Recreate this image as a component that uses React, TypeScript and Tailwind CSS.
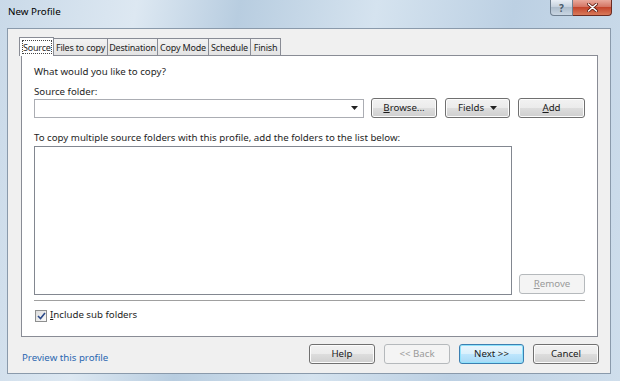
import React from "react";

const font = { fontFamily: '"Noto Sans", "Open Sans", sans-serif' };

function Btn({ children, w = "w-[65px]", kind = "normal" }: { children: React.ReactNode; w?: string; kind?: "normal" | "disabled" | "default" }) {
  const cls =
    kind === "disabled"
      ? "border-[#b5b9bc] bg-[#f4f4f4] text-[#9a9a9a]"
      : kind === "default"
      ? "border-[#3c7fb1] bg-[linear-gradient(#eaf6fd_0%,#d9f0fc_50%,#bee6fd_50%,#a7d9f5_100%)] text-[#1a1a1a] shadow-[inset_0_0_0_1px_#8fe3fc]"
      : "border-[#707070] bg-[linear-gradient(#f2f2f2_0%,#ebebeb_50%,#dddddd_50%,#cfcfcf_100%)] text-[#1a1a1a] shadow-[inset_0_0_0_1px_#fcfcfc]";
  return (
    <div className={`${w} h-[20px] rounded-[3px] border ${cls} flex items-center justify-center text-[9.7px] leading-none whitespace-nowrap`}>
      {children}
    </div>
  );
}

function Tab({ label, w, selected = false }: { label: string; w: string; selected?: boolean }) {
  if (selected) {
    return (
      <div className={`${w} flex-none h-[19px] px-[2px] pt-[2px] bg-white border border-b-0 border-[#898c95] -mb-px relative z-10 flex`}>
        <div className="flex-1 border border-dotted border-[#444] h-[14px] flex items-center justify-center text-[9px] tracking-[-0.2px] leading-none whitespace-nowrap">{label}</div>
      </div>
    );
  }
  return (
    <div className={`${w} flex-none h-[17px] border border-b-0 border-[#898c95] bg-[linear-gradient(#f3f3f3,#e3e3e3)] flex items-center justify-center text-[9px] tracking-[-0.2px] leading-none whitespace-nowrap -ml-px`}>
      {label}
    </div>
  );
}

export default function App() {
  return (
    <div className="w-[620px] h-[381px] overflow-hidden bg-[linear-gradient(100deg,#c9d9e8_0%,#dde8f2_20%,#b8cde0_35%,#d5e3ef_55%,#bcd0e3_75%,#cfdeec_100%)] text-[#1e1e1e] flex flex-col" style={font}>
      {/* title bar */}
      <div className="h-[28px] flex items-start shrink-0">
        <div className="pl-[8px] pt-[5px] text-[9.8px] text-black">New Profile</div>
        <div className="ml-auto mr-[8px] flex">
          <div className="w-[23px] h-[16px] rounded-bl-[4px] border border-[#6f7f90] border-t-0 bg-[linear-gradient(#e8eef5,#c3cfdc_50%,#aebdcc_50%,#c9d6e3)] flex items-center justify-center text-[10px] text-[#4a5a6a] leading-none font-bold">?</div>
          <div className="w-[39px] h-[16px] rounded-br-[4px] border border-l-0 border-t-0 border-[#6b2b22] bg-[linear-gradient(#e9a99c,#d2705e_50%,#c4452c_50%,#d97a5a)] flex items-center justify-center">
            <svg width="11" height="9" viewBox="0 0 11 9">
              <path d="M1.5 1 L9.5 8 M9.5 1 L1.5 8" stroke="#5a1a10" strokeWidth="3" strokeLinecap="round" />
              <path d="M1.5 1 L9.5 8 M9.5 1 L1.5 8" stroke="#ffffff" strokeWidth="1.6" strokeLinecap="round" />
            </svg>
          </div>
        </div>
      </div>
      {/* client */}
      <div className="flex-1 ml-[7px] mr-[9px] mb-[7px] border border-[#8a9aab] bg-[#f0f0f0] flex flex-col">
        <div className="pl-[13px] pr-[12px] pt-[7px] flex flex-col">
          {/* tabs */}
          <div className="flex items-end h-[19px] -ml-[2px]">
            <Tab label="Source" w="w-[35px]" selected />
            <Tab label="Files to copy" w="w-[55px]" />
            <Tab label="Destination" w="w-[51px]" />
            <Tab label="Copy Mode" w="w-[52px]" />
            <Tab label="Schedule" w="w-[43px]" />
            <Tab label="Finish" w="w-[31px]" />
          </div>
          {/* panel */}
          <div className="h-[282px] bg-white border border-[#898c95] px-[12px] pt-[8px] flex flex-col text-[9.7px]">
            <div className="h-[15px] leading-[15px]">What would you like to copy?</div>
            <div className="h-[15px] leading-[15px] mt-[5px]">Source folder:</div>
            <div className="flex items-center mt-[-1px] h-[20px]">
              <div className="w-[330px] h-[19px] border border-[#abadb3] bg-white flex items-center justify-end pr-[5px]">
                <svg width="7" height="4" viewBox="0 0 7 4"><path d="M0 0 H7 L3.5 4 Z" fill="#222" /></svg>
              </div>
              <div className="ml-[7px]"><Btn w="w-[66px]"><span><span className="underline">B</span>rowse...</span></Btn></div>
              <div className="ml-[8px]">
                <Btn w="w-[65px]">
                  <span className="flex items-center gap-[6px]">Fields<svg width="7" height="4" viewBox="0 0 7 4"><path d="M0 0 H7 L3.5 4 Z" fill="#222" /></svg></span>
                </Btn>
              </div>
              <div className="ml-[8px]"><Btn w="w-[67px]"><span><span className="underline">A</span>dd</span></Btn></div>
            </div>
            <div className="h-[15px] leading-[15px] mt-[12px]">To copy multiple source folders with this profile, add the folders to the list below:</div>
            <div className="flex mt-[1px]">
              <div className="w-[478px] h-[149px] border border-[#828790] bg-white" />
              <div className="flex flex-col justify-end ml-[7px]">
                <Btn w="w-[66px]" kind="disabled"><span><span className="underline">R</span>emove</span></Btn>
                <div className="h-[1px]" />
              </div>
            </div>
            <div className="h-px bg-[#a0a0a0] mt-[5px] w-[551px] border-b border-b-white box-content" />
            <div className="flex items-center mt-[6px] h-[15px]">
              <div className="w-[12px] h-[12px] border border-[#8e8f8f] bg-[linear-gradient(135deg,#dcdcdc,#fafafa)] flex items-center justify-center ml-[1px]">
                <svg width="9" height="8" viewBox="0 0 9 8"><path d="M1 4 L3.5 6.5 L8 1" stroke="#2b4a8a" strokeWidth="1.6" fill="none" /></svg>
              </div>
              <div className="ml-[3px]"><span className="underline">I</span>nclude sub folders</div>
            </div>
          </div>
        </div>
        {/* bottom row */}
        <div className="flex items-center pl-[14px] pr-[11px] mt-[6px]">
          <div className="text-[9.7px] text-[#2b67b0] mt-[8px]">Preview this profile</div>
          <div className="ml-auto flex gap-[9px]">
            <Btn w="w-[66px]">Help</Btn>
            <Btn w="w-[66px]" kind="disabled">&lt;&lt; Back</Btn>
            <Btn w="w-[65px]" kind="default">Next &gt;&gt;</Btn>
            <Btn w="w-[66px]">Cancel</Btn>
          </div>
        </div>
      </div>
    </div>
  );
}
